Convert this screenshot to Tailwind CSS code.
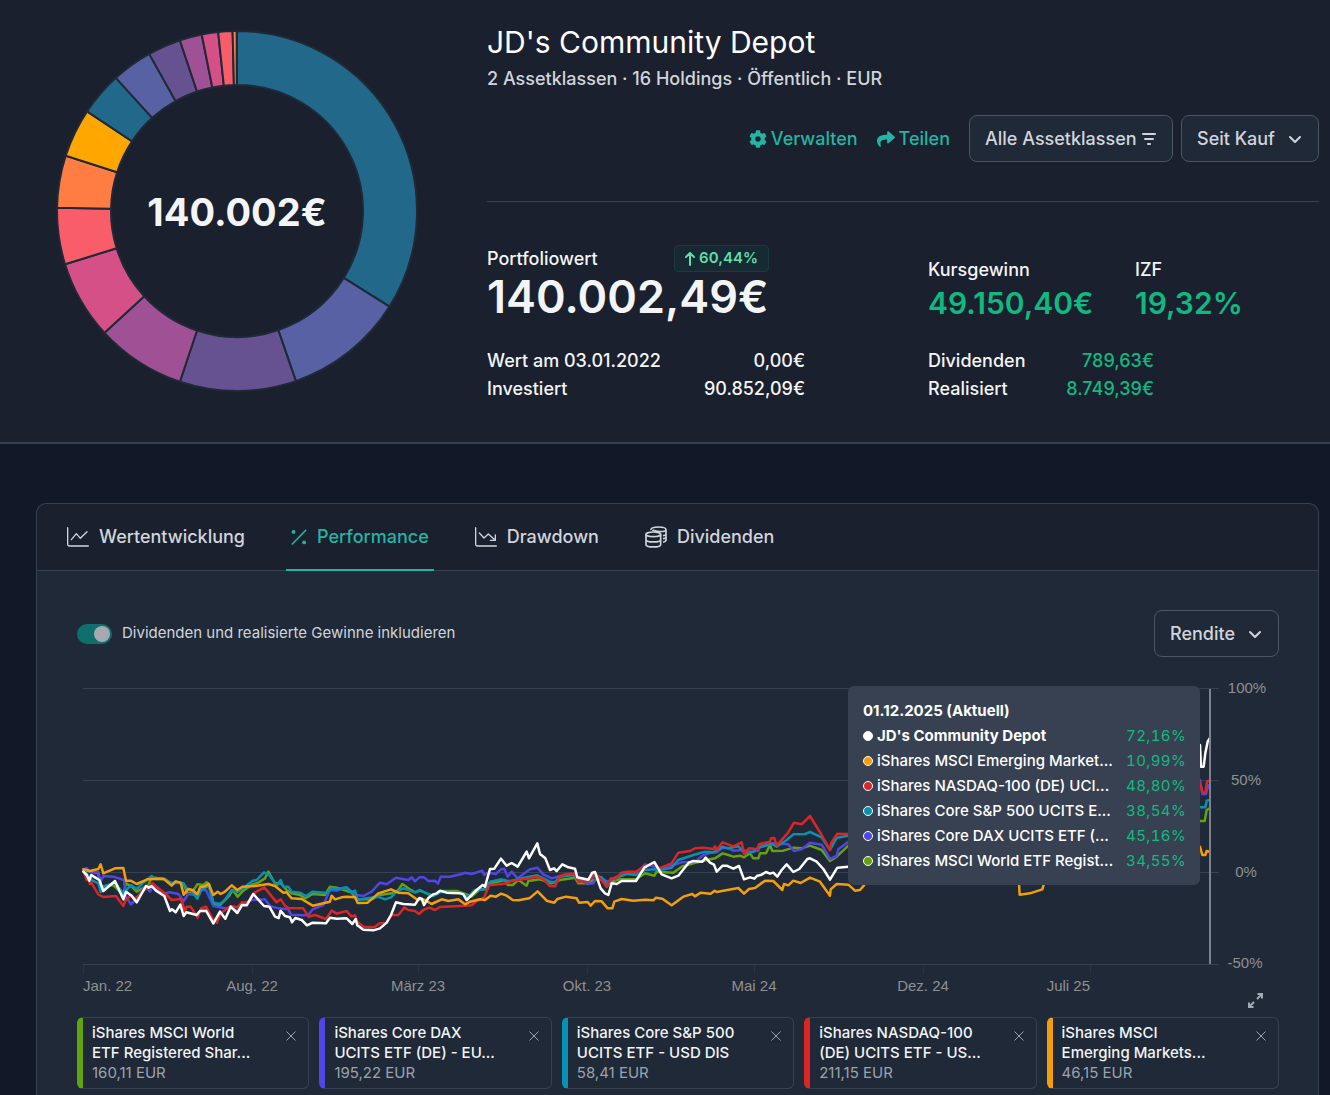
<!DOCTYPE html>
<html lang="de">
<head>
    <meta charset="UTF-8">
    <meta name="viewport" content="width=device-width, initial-scale=1.0">
    <title>JD's Community Depot</title>
    <script src="https://cdn.jsdelivr.net/npm/@tailwindcss/browser@4"></script>
</head>
<body class="bg-[#111827] font-['Inter',sans-serif] text-[#f3f4f6] min-h-screen flex flex-col">

    <!-- Portfolio header -->
    <header class="flex bg-[#1a202e] border-b-2 border-[#374151] pr-[11px] pb-[39px]">
        <div class="shrink-0 w-[487px] pl-[57px] pt-[31px]">
            <svg id="donut" class="block size-[360px] overflow-visible" viewBox="-180 -180 360 360" role="img" aria-label="Aufteilung">
                <text x="0" y="15" text-anchor="middle" font-size="38" font-weight="700" fill="#f3f4f6">140.002€</text>
            </svg>
        </div>

        <div class="grow">
            <h1 class="pt-5 text-3xl leading-[45px] text-white">JD's Community Depot</h1>
            <p class="text-lg leading-[28px] font-medium text-[#d1d5db]">2 Assetklassen · 16 Holdings · Öffentlich · EUR</p>

            <div class="mt-[22px] flex items-center justify-end text-lg font-medium">
                <a href="#" class="flex items-center gap-1 text-[#25b4a4]">
                    <svg class="size-[18px]" viewBox="0 0 512 512" fill="currentColor"><path d="M487.400 315.700l-42.600-24.600c4.300-23.200 4.300-47 0-70.200l42.600-24.600c4.900-2.800 7.100-8.600 5.500-14-11.100-35.600-30-67.800-54.700-94.600-3.800-4.100-10-5.100-14.800-2.300L380.800 110c-17.900-15.400-38.500-27.300-60.800-35.100V25.800c0-5.600-3.900-10.500-9.400-11.700-36.700-8.200-74.300-7.800-109.200 0-5.500 1.200-9.400 6.100-9.400 11.700V75c-22.200 7.900-42.800 19.800-60.800 35.100L88.700 85.500c-4.900-2.800-11-1.900-14.800 2.300-24.700 26.700-43.600 58.900-54.700 94.600-1.700 5.400.6 11.200 5.500 14L67.300 221c-4.300 23.200-4.300 47 0 70.200l-42.600 24.600c-4.900 2.800-7.100 8.600-5.500 14 11.100 35.600 30 67.800 54.700 94.600 3.800 4.100 10 5.100 14.800 2.300l42.600-24.600c17.900 15.400 38.500 27.300 60.800 35.100v49.200c0 5.600 3.900 10.500 9.400 11.700 36.700 8.200 74.300 7.800 109.200 0 5.500-1.200 9.400-6.100 9.400-11.700v-49.200c22.200-7.900 42.800-19.800 60.800-35.100l42.600 24.600c4.900 2.800 11 1.900 14.800-2.300 24.700-26.700 43.600-58.900 54.700-94.600 1.500-5.500-.7-11.300-5.600-14.100zM256 336c-44.100 0-80-35.900-80-80s35.900-80 80-80 80 35.900 80 80-35.900 80-80 80z"/></svg>
                    Verwalten
                </a>
                <a href="#" class="ml-[19px] flex items-center gap-1 text-[#25b4a4]">
                    <svg class="size-[18px]" viewBox="0 0 512 512" fill="currentColor"><path d="M503.691 189.836L327.687 37.851C312.281 24.546 288 35.347 288 56.015v80.053C127.371 137.907 0 170.100 0 322.326c0 61.441 39.581 122.309 83.333 154.132 13.653 9.931 33.111-2.533 28.077-18.631C66.066 312.814 132.917 274.316 288 272.085V360c0 20.700 24.300 31.453 39.687 18.164l176.004-152c11.071-9.562 11.086-26.753 0-36.328z"/></svg>
                    Teilen
                </a>
                <button type="button" class="ml-[19px] flex h-[47px] w-[204px] items-center justify-between rounded-lg border border-[#4b5563] bg-[#1f2937] px-[15px] text-[#d1d5db]">
                    Alle Assetklassen
                    <svg class="size-4" viewBox="0 0 16 16" stroke="currentColor" stroke-width="2" stroke-linecap="round"><path d="M2 3h12M4 8h8M7 13h2"/></svg>
                </button>
                <div class="relative ml-2">
                    <select aria-label="Zeitraum" class="h-[47px] w-[138px] appearance-none rounded-lg border border-[#4b5563] bg-[#1f2937] pl-[15px] text-[#d1d5db]">
                        <option>Seit Kauf</option>
                    </select>
                    <svg class="pointer-events-none absolute right-4 top-4 size-4" viewBox="0 0 16 16" fill="none" stroke="#d1d5db" stroke-width="2" stroke-linecap="round" stroke-linejoin="round"><path d="M3 6l5 5 5-5"/></svg>
                </div>
            </div>

            <hr class="mt-[39px] border-[#374151]">

            <div class="mt-[43px] flex">
                <div class="w-[441px]">
                    <div class="flex h-[27px] w-[282px] items-center justify-between">
                        <span class="text-lg font-medium">Portfoliowert</span>
                        <span class="flex h-[27px] items-center gap-1 rounded border border-[#1a3a3d] bg-[#172a33] px-2.5 text-[15px] font-semibold text-[#5fdfa9]">
                            <svg class="h-3.5 w-2.5" viewBox="0 0 10 14" fill="none" stroke="currentColor" stroke-width="2" stroke-linecap="round" stroke-linejoin="round"><path d="M5 13V1M1 5l4-4 4 4"/></svg>
                            60,44%
                        </span>
                    </div>
                    <p class="text-[45px] leading-[50px] font-semibold">140.002,49€</p>
                    <table class="mt-[25px] w-[318px] text-lg leading-[28px] font-medium">
                        <tr><th class="text-left font-medium">Wert am 03.01.2022</th><td class="text-right">0,00€</td></tr>
                        <tr><th class="text-left font-medium">Investiert</th><td class="text-right">90.852,09€</td></tr>
                    </table>
                </div>
                <div class="pt-3">
                    <div class="flex">
                        <div class="w-[207px]">
                            <p class="text-lg leading-[26px] font-medium">Kursgewinn</p>
                            <p class="text-3xl leading-[40px] font-semibold text-[#10b981]">49.150,40€</p>
                        </div>
                        <div>
                            <p class="text-lg leading-[26px] font-medium">IZF</p>
                            <p class="text-3xl leading-[40px] font-semibold text-[#10b981]">19,32%</p>
                        </div>
                    </div>
                    <table class="mt-6 w-[226px] text-lg leading-[28px] font-medium">
                        <tr><th class="text-left font-medium">Dividenden</th><td class="text-right text-[#10b981]">789,63€</td></tr>
                        <tr><th class="text-left font-medium">Realisiert</th><td class="text-right text-[#10b981]">8.749,39€</td></tr>
                    </table>
                </div>
            </div>
        </div>
    </header>

    <!-- Performance card -->
    <main class="mt-[59px] ml-9 mr-[11px] grow rounded-t-[10px] border border-b-0 border-[#374151] bg-[#1f2937]">
        <nav class="flex h-[67px] gap-9 rounded-t-[10px] border-b border-[#374151] bg-[#1a202e] pl-[25px] text-lg font-medium text-[#d1d5db]">
            <a href="#" class="flex h-[66px] items-center gap-2.5 px-[5px]">
                <svg class="h-5 w-[22px]" viewBox="0 0 66 60" fill="none" stroke="currentColor" stroke-width="4" stroke-linecap="round" stroke-linejoin="round"><path d="M2 2v50q0 5 5 5h57M13 38l15-18 12 14 20-20"/></svg>
                Wertentwicklung
            </a>
            <a href="#" class="flex h-[67px] items-center gap-2.5 border-b-2 border-[#25b4a4] px-[5px] text-[#25b4a4]">
                <svg class="size-4" viewBox="0 0 48 50" fill="currentColor"><path d="M3 47L45 4" stroke="currentColor" stroke-width="5" stroke-linecap="round"/><circle cx="7" cy="9" r="6"/><circle cx="40" cy="42" r="6"/></svg>
                Performance
            </a>
            <a href="#" class="flex h-[66px] items-center gap-2.5 px-[5px]">
                <svg class="h-5 w-[22px]" viewBox="0 0 66 60" fill="none" stroke="currentColor" stroke-width="4" stroke-linecap="round" stroke-linejoin="round"><path d="M2 2v50q0 5 5 5h57M13 18l14 15 13-12 20 18M61 24v16H46"/></svg>
                Drawdown
            </a>
            <a href="#" class="flex h-[66px] items-center gap-2.5 px-[5px]">
                <svg class="size-[22px]" viewBox="0 0 66 66" fill="none" stroke="currentColor" stroke-width="5" stroke-linecap="round"><ellipse cx="25" cy="25" rx="22" ry="7"/><path d="M3 25v31c0 9 44 9 44 0V25M3 41c0 9 44 9 44 0"/><path d="M18 10c2-9 45-10 45 1v32c0 2-3 4-7 5M24 13c10 5 39 5 39-2M56 29c5-1 7-3 7-5M56 38c5-1 7-3 7-5"/></svg>
                Dividenden
            </a>
        </nav>

        <div class="pl-10 pr-[39px] pt-[39px] pb-1.5">
            <div class="flex items-center justify-between">
                <label class="flex items-center gap-2.5 text-[15px] text-[#d1d5db]">
                    <input type="checkbox" checked class="h-5 w-[35px] appearance-none rounded-full bg-[#0f6f6c] p-0.5 before:ml-auto before:block before:size-4 before:rounded-full before:bg-[#a5a9b2] before:content-['']">
                    Dividenden und realisierte Gewinne inkludieren
                </label>
                <div class="relative">
                    <select aria-label="Kennzahl" class="h-[47px] w-[125px] appearance-none rounded-lg border border-[#4b5563] bg-[#1f2937] pl-[15px] text-lg font-medium text-[#d1d5db]">
                        <option>Rendite</option>
                    </select>
                    <svg class="pointer-events-none absolute right-4 top-4 size-4" viewBox="0 0 16 16" fill="none" stroke="#d1d5db" stroke-width="2" stroke-linecap="round" stroke-linejoin="round"><path d="M3 6l5 5 5-5"/></svg>
                </div>
            </div>

            <div class="relative mt-3.5">
                <svg class="block w-full overflow-visible font-['Liberation_Sans',sans-serif]" viewBox="77 671 1202 322" font-size="15">
                    <g stroke="#374151" shape-rendering="crispEdges">
                        <path d="M83 688.500H1219M83 780.500H1219M83 872.500H1219M83 964.500H1219"/>
                        <path stroke="#2a3342" d="M83.500 965v9M252.500 965v9M418.500 965v9M587.500 965v9M754.500 965v9M923.500 965v9M1090.500 965v9"/>
                    </g>
                    <g fill="#8f9092">
                        <text x="83" y="991">Jan. 22</text>
                        <g text-anchor="middle">
                            <text x="252" y="991">Aug. 22</text>
                            <text x="418" y="991">März 23</text>
                            <text x="587" y="991">Okt. 23</text>
                            <text x="754" y="991">Mai 24</text>
                            <text x="923" y="991">Dez. 24</text>
                            <text x="1247" y="693">100%</text>
                            <text x="1246" y="785">50%</text>
                            <text x="1246" y="877">0%</text>
                            <text x="1245" y="968">-50%</text>
                        </g>
                        <text x="1090" y="991" text-anchor="end">Juli 25</text>
                    </g>
                    <g transform="translate(70 840) scale(.33333)" fill="none" stroke-width="7.500" stroke-linejoin="round" stroke-linecap="round">
                        <!-- MSCI World -->
                        <g stroke="#65a30d">
                            <polyline points="40,90 85,100 92,140 130,135 160,165 168,130 185,140 200,155 235,135 245,112 285,118 305,130 320,125 341,133 352,160 368,155 382,133 400,135 410,127 418,133 430,192 450,195 478,167 488,150 503,170 520,152 548,133 565,128 585,115 595,95 615,130 632,130 650,150 665,160 690,165 705,175 728,162 765,165 780,140 800,143 845,158 860,178 905,178 930,165 965,160 985,150 997,132 1015,145 1035,157 1050,152 1090,168 1115,153 1160,153 1190,163 1205,170 1230,148 1245,148 1262,130 1305,120 1313,135 1328,135 1345,120 1370,137 1375,123 1410,118 1445,130 1470,120 1515,113 1525,130 1555,130 1570,120 1595,118 1610,140 1623,125 1650,118 1698,118 1725,100 1753,107 1760,95 1810,98 1835,80 1870,70 1910,60 1935,55 1958,40 1975,45 1990,50 2010,47 2022,52 2040,40 2050,55 2065,55 2070,40 2088,40 2100,15 2107,33 2140,32 2170,23 2195,25 2220,17 2255,30 2280,63 2300,50 2335,17"/>
                            <polyline points="3385,-57 3404,-57 3410,-90 3419,-95"/>
                        </g>
                        <!-- DAX -->
                        <g stroke="#4f46e5">
                            <polyline points="40,88 50,84 60,97 85,97 92,125 100,108 130,110 162,120 168,170 183,193 200,175 225,140 240,155 247,140 285,160 300,157 325,162 341,183 355,162 375,165 395,150 408,150 430,198 465,205 482,203 502,212 520,190 545,180 585,178 600,198 625,205 655,208 663,224 700,226 715,225 728,208 760,195 780,150 800,152 830,143 860,165 880,168 905,155 930,128 950,133 978,113 1015,120 1025,112 1035,124 1048,112 1062,112 1075,123 1095,122 1104,131 1112,110 1140,110 1175,102 1185,98 1205,102 1237,92 1243,105 1255,98 1277,102 1293,88 1303,86 1313,110 1325,95 1343,115 1380,88 1402,83 1420,103 1445,115 1470,108 1515,102 1530,120 1555,132 1570,130 1582,108 1613,125 1625,118 1655,102 1698,100 1725,73 1770,85 1810,75 1835,67 1875,65 1900,45 1925,38 1940,37 1958,23 1975,25 1990,32 2018,30 2040,35 2065,32 2070,20 2105,10 2155,13 2172,33 2195,28 2220,8 2255,14 2280,57 2300,48 2305,28 2335,5"/>
                            <polyline points="3390,-180 3397,-138 3408,-138 3414,-165 3420,-153"/>
                        </g>
                        <!-- S&P 500 -->
                        <g stroke="#0891b2">
                            <polyline points="40,88 55,108 65,120 85,130 92,156 105,138 135,128 160,160 183,135 200,147 220,128 245,108 255,117 285,117 300,130 322,128 341,130 350,145 362,150 382,176 395,148 416,138 430,188 450,192 465,180 485,150 502,157 520,145 548,122 560,120 582,97 598,105 620,137 632,120 640,140 655,140 665,155 690,158 708,168 728,155 770,159 785,145 800,148 830,142 845,158 855,152 863,180 890,175 925,170 945,178 963,172 980,155 1000,145 1035,157 1050,150 1085,168 1105,160 1115,155 1165,157 1195,170 1215,150 1245,148 1260,125 1295,118 1310,123 1325,122 1370,112 1402,106 1440,125 1455,127 1470,110 1510,105 1525,120 1555,125 1570,108 1595,112 1613,135 1625,118 1670,102 1698,105 1725,90 1750,88 1770,90 1805,83 1825,60 1870,45 1905,35 1930,37 1958,20 1975,25 2005,19 2025,40 2050,35 2065,23 2105,12 2120,20 2150,0 2170,-17 2205,-18 2220,-24 2255,-8 2280,30 2300,-7 2335,-13"/>
                            <polyline points="3385,-98 3406,-98 3410,-118 3419,-120"/>
                        </g>
                        <!-- NASDAQ-100 -->
                        <g stroke="#dc2626">
                            <polyline points="40,92 50,120 56,118 60,132 64,128 85,163 100,171 138,168 160,198 168,178 182,167 190,175 200,172 215,158 247,130 290,165 305,180 333,177 345,213 350,200 362,200 383,233 393,205 408,200 430,240 441,248 452,220 482,198 502,202 516,187 532,190 550,160 583,142 620,187 632,178 645,197 655,204 700,205 715,230 735,225 768,237 785,212 800,221 830,213 845,230 855,226 862,245 880,260 912,262 930,250 950,248 965,225 985,225 1003,203 1015,210 1035,213 1047,222 1060,210 1078,203 1095,210 1110,201 1170,198 1205,196 1220,183 1242,173 1258,135 1290,133 1310,130 1325,123 1370,116 1402,110 1420,118 1440,138 1455,139 1470,108 1490,102 1515,101 1525,125 1555,124 1570,106 1582,105 1610,140 1623,115 1635,118 1655,98 1670,95 1698,95 1725,77 1753,72 1767,85 1805,70 1825,38 1860,33 1875,25 1900,23 1930,27 1935,19 1940,30 1958,7 1990,19 2015,7 2022,42 2037,25 2062,28 2067,13 2100,5 2103,-5 2113,-6 2120,17 2155,-23 2172,-52 2195,-47 2220,-72 2255,-15 2280,30 2283,10 2302,-19 2335,-18"/>
                            <polyline points="3390,-170 3398,-142 3406,-142 3411,-175 3419,-179"/>
                        </g>
                        <!-- Emerging Markets -->
                        <g stroke="#f59e0b">
                            <polyline points="40,88 60,93 85,87 92,73 100,100 135,85 160,84 168,122 182,122 200,132 218,124 232,118 280,116 305,137 317,124 332,128 341,164 355,147 368,150 382,163 390,142 405,139 416,132 430,165 443,155 452,162 465,155 485,136 502,150 517,140 555,138 595,132 615,138 640,158 650,157 665,175 695,177 728,197 780,185 785,167 795,178 815,172 830,170 855,172 863,189 893,188 925,160 963,148 985,158 1015,160 1040,178 1060,178 1085,192 1115,178 1135,183 1165,178 1185,193 1200,185 1230,178 1245,180 1262,167 1278,170 1293,161 1310,167 1328,180 1345,181 1378,175 1403,154 1430,182 1453,188 1462,177 1488,170 1520,175 1527,188 1553,186 1562,197 1575,183 1595,184 1613,205 1627,205 1633,185 1655,177 1690,182 1725,179 1750,181 1758,173 1777,176 1805,196 1840,170 1867,162 1875,169 1892,158 1922,161 1934,152 1940,156 2005,144 2022,161 2037,147 2055,144 2085,122 2110,123 2137,150 2142,132 2155,136 2170,122 2192,129 2220,113 2250,125 2280,167 2282,148 2300,132 2335,134 2355,152 2370,150 2382,136"/>
                            <polyline points="2847,130 2849,164 2880,160 2917,148 2922,130"/>
                            <polyline points="3390,20 3397,45 3406,45 3410,33 3419,35"/>
                        </g>
                        <!-- Depot -->
                        <g stroke="#fff">
                            <polyline points="40,95 50,105 58,122 64,105 75,112 88,120 100,153 135,123 160,178 168,155 185,167 200,187 228,138 236,143 245,138 258,152 283,168 300,213 306,208 317,217 331,194 341,228 349,217 380,225 390,213 408,212 430,250 450,215 466,236 482,200 502,219 516,195 530,196 550,162 582,198 598,200 615,230 626,234 632,212 645,228 660,232 666,247 676,234 695,240 711,256 728,248 768,250 780,233 800,236 830,235 847,252 857,237 862,256 880,269 910,271 930,265 950,248 963,225 978,187 1000,192 1035,194 1048,174 1055,176 1062,195 1075,174 1090,163 1100,160 1110,152 1130,158 1170,160 1180,163 1190,180 1205,165 1220,150 1238,135 1245,140 1260,87 1273,86 1293,56 1310,77 1325,69 1343,80 1370,35 1377,55 1402,10 1410,42 1426,55 1440,90 1452,85 1460,93 1477,73 1495,82 1515,86 1522,112 1555,119 1567,98 1575,96 1592,145 1605,160 1615,165 1625,130 1640,132 1655,123 1698,123 1723,83 1753,66 1775,103 1805,115 1825,107 1856,68 1870,63 1897,65 1907,53 1920,68 1932,74 1940,95 1958,77 1970,77 1990,86 2007,78 2022,118 2040,112 2053,116 2062,107 2075,104 2088,96 2100,101 2110,98 2122,110 2135,90 2150,73 2170,96 2188,87 2212,57 2220,55 2240,65 2260,87 2280,119 2302,83 2335,80"/>
                            <polyline points="3390,-285 3393,-220 3401,-220 3406,-260 3413,-295 3419,-305"/>
                        </g>
                    </g>
                    <path d="M1210 689V964" stroke="#7c838d" stroke-width="2"/>
                </svg>

                <div class="absolute top-[15px] right-[79px] w-[352px] rounded-md bg-[#384152] pl-[15px] pr-3.5 py-3 text-[15px] leading-[25px] text-white">
                    <p class="font-bold">01.12.2025 (Aktuell)</p>
                    <ul>
                        <li class="flex items-center gap-1"><span class="size-2.5 rounded-full border border-white bg-white"></span><span class="grow font-bold">JD's Community Depot</span><span class="tracking-wide tabular-nums text-[#10b981]">72,16%</span></li>
                        <li class="flex items-center gap-1"><span class="size-2.5 rounded-full border border-white bg-[#f59e0b]"></span><span class="grow font-medium">iShares MSCI Emerging Market...</span><span class="tracking-wide tabular-nums text-[#10b981]">10,99%</span></li>
                        <li class="flex items-center gap-1"><span class="size-2.5 rounded-full border border-white bg-[#dc2626]"></span><span class="grow font-medium">iShares NASDAQ-100 (DE) UCI...</span><span class="tracking-wide tabular-nums text-[#10b981]">48,80%</span></li>
                        <li class="flex items-center gap-1"><span class="size-2.5 rounded-full border border-white bg-[#0891b2]"></span><span class="grow font-medium">iShares Core S&amp;P 500 UCITS E...</span><span class="tracking-wide tabular-nums text-[#10b981]">38,54%</span></li>
                        <li class="flex items-center gap-1"><span class="size-2.5 rounded-full border border-white bg-[#4f46e5]"></span><span class="grow font-medium">iShares Core DAX UCITS ETF (...</span><span class="tracking-wide tabular-nums text-[#10b981]">45,16%</span></li>
                        <li class="flex items-center gap-1"><span class="size-2.5 rounded-full border border-white bg-[#65a30d]"></span><span class="grow font-medium">iShares MSCI World ETF Regist...</span><span class="tracking-wide tabular-nums text-[#10b981]">34,55%</span></li>
                    </ul>
                </div>
            </div>

            <div class="flex justify-end pr-4">
                <button type="button" aria-label="Vollbild" class="text-[#a3a9b3]">
                    <svg class="block size-[15px]" viewBox="0 0 15 15" fill="none" stroke="currentColor" stroke-width="2"><path d="M9 6l4.500-4.500M9.500 1H14v4.500M6 9l-4.500 4.500M1 9.500V14h4.500"/></svg>
                </button>
            </div>

            <!-- Benchmarks -->
            <div class="mt-[9px] grid grid-cols-5 gap-2.5 text-[15px] leading-5">
                <div class="flex h-[72px] items-start justify-between rounded-md border border-l-[6px] border-[#374151] border-l-[#65a30d] pt-[5px] pl-[9px] pr-3">
                    <div><p class="font-medium">iShares MSCI World<br>ETF Registered Shar...</p><p class="text-[#9ca3af]">160,11 EUR</p></div>
                    <button type="button" aria-label="Entfernen" class="mt-2 text-[#9ca3af]"><svg class="block size-2.5" viewBox="0 0 10 10" stroke="currentColor"><path d="M.5.5l9 9M9.500.5l-9 9"/></svg></button>
                </div>
                <div class="flex h-[72px] items-start justify-between rounded-md border border-l-[6px] border-[#374151] border-l-[#4f46e5] pt-[5px] pl-[9px] pr-3">
                    <div><p class="font-medium">iShares Core DAX<br>UCITS ETF (DE) - EU...</p><p class="text-[#9ca3af]">195,22 EUR</p></div>
                    <button type="button" aria-label="Entfernen" class="mt-2 text-[#9ca3af]"><svg class="block size-2.5" viewBox="0 0 10 10" stroke="currentColor"><path d="M.5.5l9 9M9.500.5l-9 9"/></svg></button>
                </div>
                <div class="flex h-[72px] items-start justify-between rounded-md border border-l-[6px] border-[#374151] border-l-[#0891b2] pt-[5px] pl-[9px] pr-3">
                    <div><p class="font-medium">iShares Core S&amp;P 500<br>UCITS ETF - USD DIS</p><p class="text-[#9ca3af]">58,41 EUR</p></div>
                    <button type="button" aria-label="Entfernen" class="mt-2 text-[#9ca3af]"><svg class="block size-2.5" viewBox="0 0 10 10" stroke="currentColor"><path d="M.5.5l9 9M9.500.5l-9 9"/></svg></button>
                </div>
                <div class="flex h-[72px] items-start justify-between rounded-md border border-l-[6px] border-[#374151] border-l-[#dc2626] pt-[5px] pl-[9px] pr-3">
                    <div><p class="font-medium">iShares NASDAQ-100<br>(DE) UCITS ETF - US...</p><p class="text-[#9ca3af]">211,15 EUR</p></div>
                    <button type="button" aria-label="Entfernen" class="mt-2 text-[#9ca3af]"><svg class="block size-2.5" viewBox="0 0 10 10" stroke="currentColor"><path d="M.5.5l9 9M9.500.5l-9 9"/></svg></button>
                </div>
                <div class="flex h-[72px] items-start justify-between rounded-md border border-l-[6px] border-[#374151] border-l-[#f59e0b] pt-[5px] pl-[9px] pr-3">
                    <div><p class="font-medium">iShares MSCI<br>Emerging Markets...</p><p class="text-[#9ca3af]">46,15 EUR</p></div>
                    <button type="button" aria-label="Entfernen" class="mt-2 text-[#9ca3af]"><svg class="block size-2.5" viewBox="0 0 10 10" stroke="currentColor"><path d="M.5.5l9 9M9.500.5l-9 9"/></svg></button>
                </div>
            </div>
        </div>
    </main>

    <script>
        // End angle of each slice in degrees, clockwise from the top
        const slices = [
            [122.1, '#22688a'], [160.9, '#5861a3'], [198.5, '#665191'], [227.4, '#a05195'],
            [252.8, '#d45087'], [271, '#f95d6a'], [287.9, '#ff7c43'], [303.6, '#ffa600'],
            [317.7, '#22688a'], [330.8, '#5861a3'], [341.5, '#665191'], [348.7, '#a05195'],
            [354, '#d45087'], [358.6, '#f95d6a'], [359.9, '#ff7c43']
        ];
        const donut = document.getElementById('donut');
        const point = (deg, r) => {
            const a = deg * Math.PI / 180;
            return (r * Math.sin(a)).toFixed(2) + ' ' + (-r * Math.cos(a)).toFixed(2);
        };
        let start = 0;
        slices.forEach(function([end, color]) {
            const path = document.createElementNS('http://www.w3.org/2000/svg', 'path');
            path.setAttribute('d', `M${point(start, 180)}A180 180 0 0 1 ${point(end, 180)}L${point(end, 126)}A126 126 0 0 0 ${point(start, 126)}Z`);
            path.setAttribute('fill', color);
            path.setAttribute('stroke', '#1f2937');
            path.setAttribute('stroke-width', '2');
            donut.appendChild(path);
            start = end;
        });
    </script>
</body>
</html>
